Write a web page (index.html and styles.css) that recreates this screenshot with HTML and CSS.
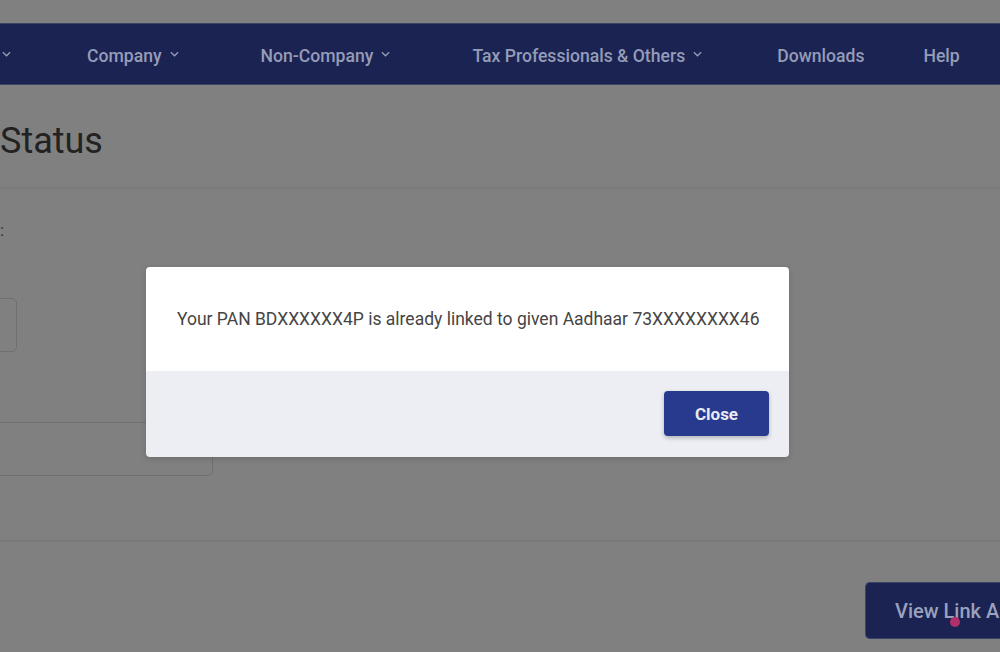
FILE: index.html
```html
<!DOCTYPE html>
<html lang="en">

<head>
    <meta charset="UTF-8">
    <meta name="viewport" content="width=device-width, initial-scale=1.0">
    <title>Link Aadhaar Status</title>
    <link rel="stylesheet" href="styles.css">
</head>

<body>
    <div class="topbar"></div>
    <nav class="nav">
        <div class="nav_list">
            <div class="nav_item first"><svg class="chev" viewBox="0 0 10 6"><polyline points="1,1 5,5 9,1" /></svg></div>
            <div class="nav_item">Company <svg class="chev" viewBox="0 0 10 6"><polyline points="1,1 5,5 9,1" /></svg></div>
            <div class="nav_item">Non-Company <svg class="chev" viewBox="0 0 10 6"><polyline points="1,1 5,5 9,1" /></svg></div>
            <div class="nav_item">Tax Professionals &amp; Others <svg class="chev" viewBox="0 0 10 6"><polyline points="1,1 5,5 9,1" /></svg></div>
            <div class="nav_item">Downloads</div>
            <div class="nav_item">Help</div>
        </div>
    </nav>

    <div class="page">
        <div class="title_row">
            <h1 class="title">Status</h1>
        </div>
        <div class="form">
            <div class="label">:</div>
            <div class="input small"></div>
            <div class="input wide"></div>
        </div>
        <div class="actions">
            <div class="btn_dark">View Link A</div>
            <span class="cursor"></span>
        </div>
    </div>

    <div class="modal">
        <div class="modal_body">
            Your PAN BDXXXXXX4P is already linked to given Aadhaar 73XXXXXXXX46
        </div>
        <div class="modal_foot">
            <div class="btn_close">Close</div>
        </div>
    </div>
</body>

</html>
```

FILE: styles.css
```css
* {
    box-sizing: border-box;
}

body {
    margin: 0;
    background: #808080;
    font-family: Roboto, "Liberation Sans", sans-serif;
    width: 1000px;
    height: 652px;
    overflow: hidden;
}

.topbar {
    height: 23px;
}

.nav {
    height: 62px;
    background: #1b2352;
    border-top: 1px solid #3a4468;
    border-bottom: 1px solid #3a4468;
    display: flex;
    align-items: center;
    overflow: hidden;
    padding-top: 3px;
}

.nav_list {
    display: flex;
    align-items: center;
    margin-left: -6px;
    white-space: nowrap;
}

.nav_item {
    color: #959cb8;
    font-size: 17.6px;
    font-weight: 500;
    display: flex;
    align-items: center;
    margin-right: 82px;
}

.nav_item.first {
    margin-right: 76px;
}

.nav_item:nth-child(4) {
    margin-right: 75px;
}

.nav_item:nth-child(5) {
    margin-right: 59px;
}

.chev {
    width: 9px;
    height: 6px;
    margin-left: 8px;
    margin-top: -3px;
    fill: none;
    stroke: #959cb8;
    stroke-width: 1.4;
}

.page {
    overflow: hidden;
}

.title_row {
    height: 104px;
    border-bottom: 2px solid #7a7a7a;
    display: flex;
    align-items: center;
}

.title {
    margin: 10px 0 0 0;
    font-size: 36px;
    font-weight: 400;
    color: #222;
    white-space: nowrap;
}

.form {
    height: 353px;
    border-bottom: 2px solid #7a7a7a;
    padding-top: 31px;
}

.label {
    font-size: 17px;
    color: #333;
    height: 20px;
}

.input {
    border: 1px solid #6f6f6f;
    border-radius: 5px;
    height: 54px;
    margin-left: -40px;
}

.input.small {
    width: 57px;
    margin-top: 58px;
}

.input.wide {
    width: 253px;
    margin-top: 70px;
}

.actions {
    display: flex;
    justify-content: flex-end;
    padding-top: 40px;
    position: relative;
}

.btn_dark {
    background: #1b2352;
    border: 1px solid #3a4468;
    border-right: none;
    border-radius: 5px 0 0 5px;
    height: 57px;
    width: 135px;
    padding: 0 0 0 29px;
    display: flex;
    align-items: center;
    color: #9aa1bd;
    font-size: 20px;
    font-weight: 500;
    white-space: nowrap;
}

.cursor {
    position: absolute;
    left: 950px;
    top: 75px;
    width: 10px;
    height: 10px;
    border-radius: 50%;
    background: #b0306a;
}

.modal {
    position: absolute;
    left: 146px;
    top: 267px;
    width: 643px;
    border-radius: 4px;
    overflow: hidden;
    box-shadow: 0 2px 6px rgba(0, 0, 0, 0.15);
}

.modal_body {
    background: #fff;
    height: 104px;
    display: flex;
    align-items: center;
    padding: 0 0 0 31px;
    color: #454545;
    font-size: 17.5px;
    white-space: nowrap;
}

.modal_foot {
    background: #edeef3;
    height: 86px;
    display: flex;
    justify-content: flex-end;
    align-items: flex-start;
    padding: 20px 20px 0 0;
}

.btn_close {
    width: 105px;
    height: 45px;
    background: #283a8e;
    border-radius: 4px;
    color: #e8eaf3;
    font-size: 17px;
    font-weight: 700;
    display: flex;
    align-items: center;
    justify-content: center;
    box-shadow: 0 2px 4px rgba(0, 0, 0, 0.25);
}
```
